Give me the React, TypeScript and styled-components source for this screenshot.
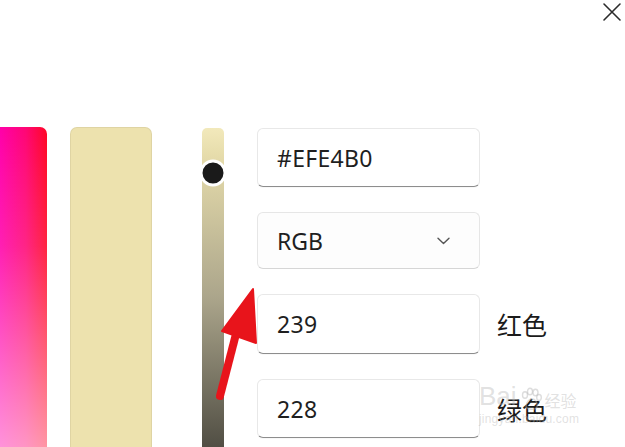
import React from 'react';
import styled, { createGlobalStyle } from 'styled-components';

const Global = createGlobalStyle`
  html, body { margin: 0; padding: 0; background: #fff; overflow: hidden; }
  body { font-family: "Noto Sans", "Noto Sans CJK SC", sans-serif; color: #1b1b1b; }
`;

const Page = styled.div`
  position: relative;
  width: 625px;
  height: 447px;
  overflow: hidden;
  background: #fff;
`;

const TopBar = styled.div`
  display: flex;
  justify-content: flex-end;
  height: 127px;
  padding: 1px 2px 0 0;
  box-sizing: border-box;
`;

const CloseButton = styled.button`
  width: 22px;
  height: 22px;
  padding: 0;
  border: none;
  background: transparent;
  display: flex;
  align-items: center;
  justify-content: center;
`;

const Content = styled.div`
  display: flex;
  align-items: flex-start;
`;

const Spectrum = styled.div`
  width: 47px;
  height: 340px;
  border-radius: 0 7px 0 0;
  background:
    linear-gradient(to bottom, rgba(255,255,255,0) 0%, rgba(255,255,255,0.12) 35%, rgba(255,255,255,0.62) 100%),
    linear-gradient(to right, #ff00aa 0%, #ff0674 55%, #ff0726 100%);
`;

const Swatch = styled.div`
  margin-left: 23px;
  width: 82px;
  height: 340px;
  box-sizing: border-box;
  border-radius: 7px;
  background: #ede2ae;
  border: 1px solid rgba(0, 0, 0, 0.06);
`;

const Track = styled.div`
  position: relative;
  margin-left: 50px;
  margin-top: 1px;
  width: 22px;
  height: 340px;
  border-radius: 5px 5px 0 0;
  background: linear-gradient(to bottom, #f2e9bb 0%, #e6dcab 8%, #aba58b 50%, #44423a 100%);
`;

const Thumb = styled.div`
  position: absolute;
  left: 50%;
  top: 45px;
  width: 21px;
  height: 21px;
  transform: translate(-50%, -50%);
  border-radius: 50%;
  background: #1a1a1a;
  border: 3px solid #fff;
`;

const Form = styled.div`
  margin-left: 33px;
  margin-top: 1px;
  display: flex;
  flex-direction: column;
  gap: 25px;
`;

const Row = styled.div`
  display: flex;
  align-items: center;
  gap: 17px;
`;

const Field = styled.div<{ $h?: number }>`
  width: 223px;
  height: ${p => p.$h ?? 59}px;
  box-sizing: border-box;
  display: flex;
  align-items: center;
  padding-left: 19px;
  background: #fff;
  border: 1px solid #e8e8e8;
  border-bottom: 1px solid #8d8d8d;
  border-radius: 6px;
  font-size: 23px;
  letter-spacing: 0.3px;
  color: #1f1f1f;
  box-shadow: 0 1px 1px rgba(0,0,0,0.03);
`;

const Select = styled.div`
  width: 223px;
  height: 57px;
  box-sizing: border-box;
  display: flex;
  align-items: center;
  justify-content: space-between;
  padding: 0 29px 0 19px;
  background: #fdfdfd;
  border: 1px solid #e6e6e6;
  border-bottom-color: #d6d6d6;
  border-radius: 6px;
  font-size: 23px;
  color: #1f1f1f;
`;

const Label = styled.span`
  font-family: "Noto Sans CJK SC", "Noto Sans", sans-serif;
  font-size: 25px;
  color: #1b1b1b;
`;

const Annotation = styled.svg`
  position: absolute;
  left: 0;
  top: 0;
  pointer-events: none;
`;

const Watermark = styled.div`
  position: absolute;
  left: 479px;
  top: 381px;
  display: flex;
  flex-direction: column;
  color: rgba(180, 180, 180, 0.4);
  font-family: "Liberation Sans", sans-serif;
  pointer-events: none;
`;

const WmTop = styled.div`
  display: flex;
  align-items: flex-end;
  gap: 2px;
  font-size: 26px;
  line-height: 30px;
`;

const WmCjk = styled.span`
  font-family: "Noto Sans CJK SC", sans-serif;
  font-size: 16px;
  line-height: 22px;
`;

const WmUrl = styled.div`
  font-size: 12px;
  line-height: 16px;
  letter-spacing: 0.2px;
`;

export default function App() {
  return (
    <Page>
      <Global />
      <TopBar>
        <CloseButton aria-label="关闭">
          <svg width="20" height="20" viewBox="0 0 20 20">
            <path d="M2 2 L18 18 M18 2 L2 18" stroke="#2b2b2b" strokeWidth="1.6" strokeLinecap="round" />
          </svg>
        </CloseButton>
      </TopBar>
      <Content>
        <Spectrum />
        <Swatch />
        <Track>
          <Thumb />
        </Track>
        <Form>
          <Row>
            <Field>#EFE4B0</Field>
          </Row>
          <Row>
            <Select>
              <span>RGB</span>
              <svg width="13" height="8" viewBox="0 0 13 8">
                <path d="M1 1.2 L6.5 6.5 L12 1.2" fill="none" stroke="#555" strokeWidth="1.4" strokeLinecap="round" strokeLinejoin="round" />
              </svg>
            </Select>
          </Row>
          <Row>
            <Field $h={60}>239</Field>
            <Label>红色</Label>
          </Row>
          <Row>
            <Field>228</Field>
            <Label>绿色</Label>
          </Row>
        </Form>
      </Content>
      <Watermark>
        <WmTop>
          <span>Bai</span>
          <svg width="24" height="24" viewBox="0 0 24 24">
            <g fill="none" stroke="rgba(180,180,180,0.45)" strokeWidth="1.4">
              <ellipse cx="6" cy="8" rx="2.5" ry="3.2" />
              <ellipse cx="11" cy="4.5" rx="2.5" ry="3.2" />
              <ellipse cx="16.5" cy="5.5" rx="2.5" ry="3.2" />
              <ellipse cx="20" cy="10.5" rx="2.3" ry="3" />
              <path d="M7 20 C7 14 11 12 13 12 C16 12 19 15 18 20 C17 23 9 23 7 20 Z" />
            </g>
          </svg>
          <WmCjk>经验</WmCjk>
        </WmTop>
        <WmUrl>jingyan.baidu.com</WmUrl>
      </Watermark>
      <Annotation width="625" height="447" viewBox="0 0 625 447">
        <line x1="236" y1="334" x2="220" y2="396" stroke="#e8141b" strokeWidth="8" strokeLinecap="round" />
        <polygon points="253,289 222,331 256,343" fill="#e8141b" stroke="#e8141b" strokeWidth="2" strokeLinejoin="round" />
      </Annotation>
    </Page>
  );
}
